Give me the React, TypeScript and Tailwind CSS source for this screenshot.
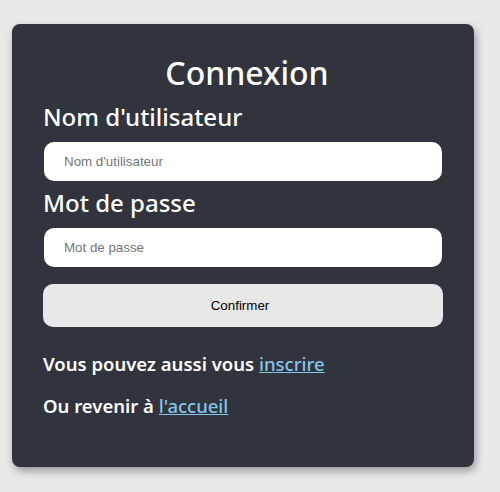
import React from "react";

export default function App() {
  return (
    <div className="min-h-screen bg-[#e9e9e9] pt-6 pl-3" style={{ fontFamily: '"Noto Sans", sans-serif' }}>
      <div className="w-[462px] h-[443px] bg-[#31333d] rounded-lg shadow-[2px_4px_8px_rgba(0,0,0,0.35)] px-8 pt-[29px] text-white">
        <h1 className="text-[32px] leading-[40px] text-center font-medium pl-[8px]">Connexion</h1>
        <div className="mt-2 -ml-px text-[24px] leading-[32px] font-medium">Nom d'utilisateur</div>
        <input
          type="text"
          placeholder="Nom d'utilisateur"
          className="mt-[9px] block w-full h-[39px] bg-white rounded-[10px] pl-5 text-[13.33px] text-black placeholder:text-[#757575] outline-none"
          style={{ fontFamily: '"Liberation Sans", Arial, sans-serif' }}
        />
        <div className="mt-[6px] -ml-px text-[24px] leading-[32px] font-medium">Mot de passe</div>
        <input
          type="password"
          placeholder="Mot de passe"
          className="mt-[9px] block w-full h-[39px] bg-white rounded-[10px] pl-5 text-[13.33px] text-black placeholder:text-[#757575] outline-none"
          style={{ fontFamily: '"Liberation Sans", Arial, sans-serif' }}
        />
        <button
          className="mt-[17px] -ml-px block w-[400px] h-[43px] bg-[#e8e8e8] rounded-[10px] text-[13.33px] text-black pr-[6px]"
          style={{ fontFamily: '"Liberation Sans", Arial, sans-serif' }}
        >
          Confirmer
        </button>
        <p className="mt-[23px] -ml-px text-[18.5px] leading-[28px] font-semibold">
          Vous pouvez aussi vous{" "}
          <a href="#" className="text-[#84c6ea] underline font-medium">inscrire</a>
        </p>
        <p className="mt-[14px] -ml-px text-[18.5px] leading-[28px] font-semibold">
          Ou revenir à{" "}
          <a href="#" className="text-[#84c6ea] underline font-medium">l'accueil</a>
        </p>
      </div>
    </div>
  );
}
